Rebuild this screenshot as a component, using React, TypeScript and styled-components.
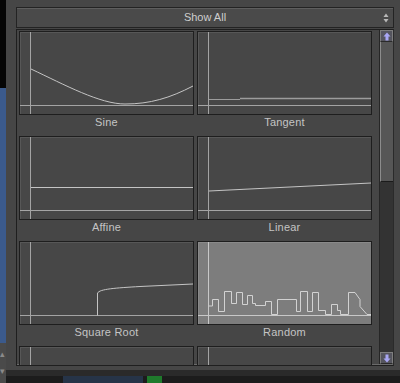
import React from "react";
import styled, { createGlobalStyle } from "styled-components";

const Global = createGlobalStyle`
  html, body { margin: 0; padding: 0; background: #262626; overflow: hidden; }
  body { font-family: "Liberation Sans", Arial, sans-serif; }
`;

const Root = styled.div`
  display: flex;
  width: 400px;
  height: 383px;
  overflow: hidden;
`;

const LeftStrip = styled.div`
  width: 6px;
  display: flex;
  flex-direction: column;
  flex: none;
`;

const StripSeg = styled.div<{ $bg: string; $h?: number }>`
  background: ${(p) => p.$bg};
  ${(p) => (p.$h ? `height: ${p.$h}px; flex: none;` : "flex: 1;")}
`;

const MiniScroll = styled.div`
  height: 40px;
  flex: none;
  background: #4a4a4a;
  display: flex;
  flex-direction: column;
  justify-content: center;
  gap: 8px;
  align-items: flex-start;
  color: #8a8a8a;
  font-size: 9px;
  line-height: 9px;
`;

const Main = styled.div`
  flex: 1;
  display: flex;
  flex-direction: column;
  min-width: 0;
`;

const Panel = styled.div`
  height: 370px;
  flex: none;
  box-sizing: border-box;
  background: #464646;
  padding: 7px 6px 0 10px;
  display: flex;
  flex-direction: column;
  gap: 1px;
`;

const Dropdown = styled.div`
  height: 21px;
  box-sizing: border-box;
  border: 1px solid #232323;
  background: #4a4a4a;
  box-shadow: inset 0 1px 0 #5e5e5e;
  display: flex;
  align-items: center;
  color: #cdcdcd;
  font-size: 11px;
`;

const DropSide = styled.div`
  width: 14px;
  display: flex;
  justify-content: center;
  align-items: center;
`;

const DropText = styled.div`
  flex: 1;
  text-align: center;
  line-height: 19px;
`;

const Frame = styled.div`
  height: 337px;
  box-sizing: border-box;
  border: 1px solid #1f1f1f;
  border-right-color: #2a2a2a;
  box-shadow: inset 0 -1px 0 #6a6a6a;
  display: flex;
  overflow: hidden;
`;

const Grid = styled.div`
  flex: 1;
  padding: 1px 0 0 2px;
  display: grid;
  grid-template-columns: 175px 175px;
  column-gap: 3px;
  row-gap: 5px;
  align-content: start;
  overflow: hidden;
`;

const Tile = styled.div`
  display: flex;
  flex-direction: column;
`;

const Card = styled.div<{ $selected?: boolean }>`
  height: 84px;
  box-sizing: border-box;
  border: 1px solid #1e1e1e;
  background: ${(p) => (p.$selected ? "#7d7d7d" : "#474747")};
  box-shadow: inset 1px 1px 0 ${(p) => (p.$selected ? "#8a8a8a" : "#575757")};
  svg { display: block; }
`;

const Label = styled.div`
  height: 16px;
  line-height: 14px;
  text-align: center;
  font-size: 11px;
  letter-spacing: 0.2px;
  color: #c4c4c4;
`;

const Scrollbar = styled.div`
  width: 14px;
  flex: none;
  margin-bottom: 1px;
  background: #333333;
  border-left: 1px solid #262626;
  box-sizing: border-box;
  display: flex;
  flex-direction: column;
`;

const ArrowButton = styled.div`
  height: 12px;
  flex: none;
  box-sizing: border-box;
  border: 1px solid #7e7e7e;
  border-bottom-color: #2a2a2a;
  background: #55555e;
  display: flex;
  align-items: center;
  justify-content: center;
`;

const Thumb = styled.div`
  height: 140px;
  flex: none;
  box-sizing: border-box;
  background: #565656;
  border-left: 1px solid #8c8c8c;
  border-bottom: 1px solid #1b1b1b;
`;

const TrackFill = styled.div`
  flex: 1;
`;

const BottomStrip = styled.div`
  flex: 1;
  background: #2a2a2a;
  padding-top: 6px;
  display: flex;
`;

const BottomSeg = styled.div<{ $bg: string; $w?: number }>`
  background: ${(p) => p.$bg};
  ${(p) => (p.$w ? `width: ${p.$w}px; flex: none;` : "flex: 1;")}
`;

const AXIS = "#a4a4a4";
const CURVE = "#c4c4c4";

type Graph = { name: string; selected?: boolean; draw?: React.ReactNode };

const Axes: React.FC<{ light?: boolean }> = ({ light }) => (
  <>
    <line x1="10.5" y1="0" x2="10.5" y2="82" stroke={light ? "#c8c8c8" : AXIS} strokeWidth="1" />
    <line x1="0" y1="73.5" x2="173" y2="73.5" stroke={light ? "#c8c8c8" : AXIS} strokeWidth="1" />
  </>
);

const graphs: Graph[] = [
  {
    name: "Sine",
    draw: (
      <path d="M11,37 C45,53 80,72 105,72 C130,72 150,66 173,54" fill="none" stroke={CURVE} strokeWidth="1" />
    ),
  },
  {
    name: "Tangent",
    draw: (
      <>
        <path d="M11,67.5 H42" fill="none" stroke="#9c9c9c" strokeWidth="1" />
        <path d="M42,66.5 H173" fill="none" stroke="#9c9c9c" strokeWidth="1.5" />
      </>
    ),
  },
  {
    name: "Affine",
    draw: <path d="M11,50.5 H173" fill="none" stroke={CURVE} strokeWidth="1" />,
  },
  {
    name: "Linear",
    draw: <path d="M11,54 L173,46" fill="none" stroke={CURVE} strokeWidth="1" />,
  },
  {
    name: "Square Root",
    draw: (
      <path d="M77.5,73.5 V51 C80,47 95,46 120,44.5 L173,42" fill="none" stroke={CURVE} strokeWidth="1" />
    ),
  },
  {
    name: "Random",
    selected: true,
    draw: (
      <path
        d="M11,64 H14.5 V57.5 H20.5 V69.5 H26.5 V49.5 H33.5 V61.5 H38.5 V50.5 H44.5 V62.5 H49.5 V53.5 H54.5 V61.5 H57.5 V63.5 H67.5 V59.5 H73.5 V72.5 H79.5 V57.5 H98.5 V69.5 H102.5 V49.5 H109.5 V69.5 H114.5 V50.5 H120.5 V68.5 H127.5 V72.5 H133.5 V62.5 H139.5 V68.5 H142.5 V72.5 H150.5 V50.5 H157 L162,57.5 V64.5 L169,72.5 H173"
        fill="none"
        stroke="#d2d2d2"
        strokeWidth="1"
      />
    ),
  },
  { name: "" },
  { name: "" },
];

const UpDown = () => (
  <svg width="6" height="10" viewBox="0 0 6 10">
    <path d="M3,0.5 L5.5,4 H0.5 Z" fill="#b8b8b8" />
    <path d="M3,9.5 L5.5,6 H0.5 Z" fill="#b8b8b8" />
  </svg>
);

const BlueArrow: React.FC<{ down?: boolean }> = ({ down }) => (
  <svg width="8" height="9" viewBox="0 0 8 9" style={down ? { transform: "rotate(180deg)" } : undefined}>
    <path d="M4,0.5 L7.5,4.5 H5.5 V8.5 H2.5 V4.5 H0.5 Z" fill="#a9a7f4" />
  </svg>
);

export default function App() {
  return (
    <Root>
      <Global />
      <LeftStrip>
        <StripSeg $bg="#050505" $h={88} />
        <StripSeg $bg="#3b5a8c" />
        <MiniScroll>
          <span>▴</span>
          <span>▾</span>
        </MiniScroll>
      </LeftStrip>
      <Main>
        <Panel>
          <Dropdown>
            <DropSide />
            <DropText>Show All</DropText>
            <DropSide>
              <UpDown />
            </DropSide>
          </Dropdown>
          <Frame>
            <Grid>
              {graphs.map((g, i) => (
                <Tile key={i}>
                  <Card $selected={g.selected}>
                    <svg width="173" height="82" viewBox="0 0 173 82">
                      <Axes light={g.selected} />
                      {g.draw}
                    </svg>
                  </Card>
                  <Label>{g.name}</Label>
                </Tile>
              ))}
            </Grid>
            <Scrollbar>
              <ArrowButton>
                <BlueArrow />
              </ArrowButton>
              <Thumb />
              <TrackFill />
              <ArrowButton>
                <BlueArrow down />
              </ArrowButton>
            </Scrollbar>
          </Frame>
        </Panel>
        <BottomStrip>
          <BottomSeg $bg="#1c1c1c" $w={57} />
          <BottomSeg $bg="#263448" $w={80} />
          <BottomSeg $bg="#1c1c1c" $w={4} />
          <BottomSeg $bg="#1f7a2c" $w={15} />
          <BottomSeg $bg="#1c1c1c" />
        </BottomStrip>
      </Main>
    </Root>
  );
}
